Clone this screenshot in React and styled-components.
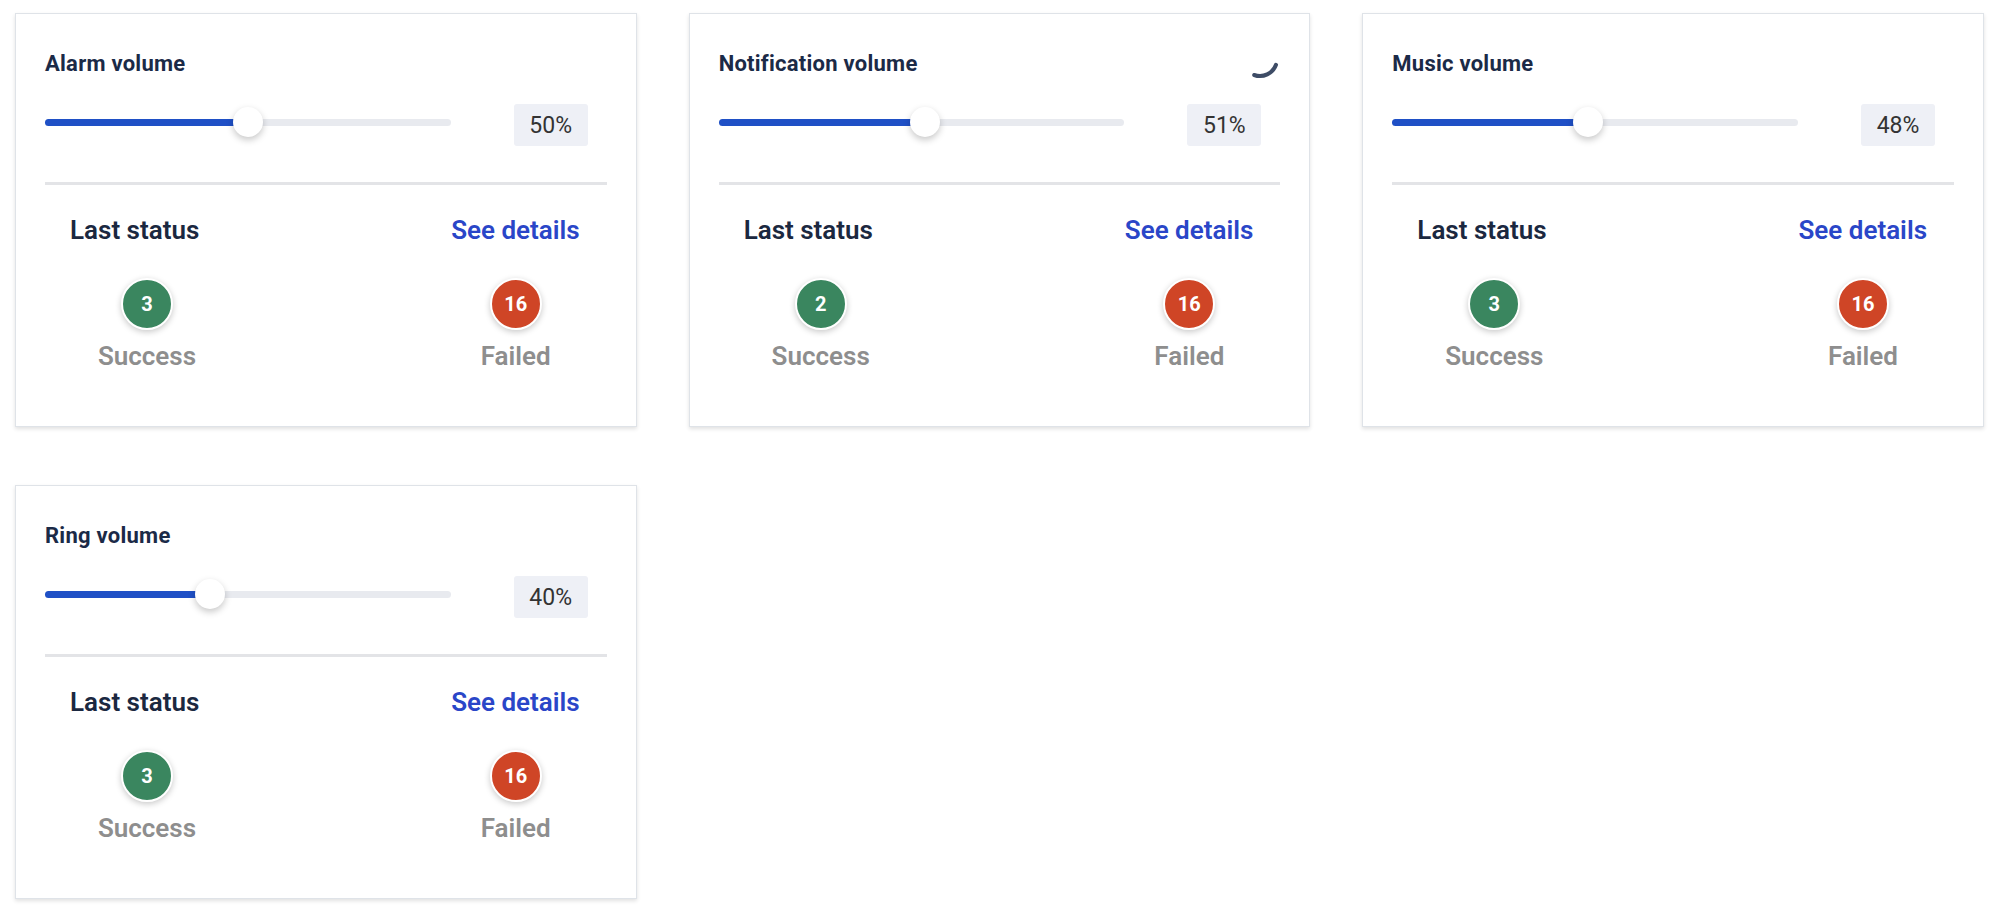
import React from "react";
import styled, { createGlobalStyle } from "styled-components";

const Global = createGlobalStyle`
  html, body { margin: 0; padding: 0; background: #ffffff; }
  body { font-family: Roboto, "Noto Sans", "Liberation Sans", sans-serif; }
  * { box-sizing: border-box; }
`;

const Page = styled.div`
  display: grid;
  grid-template-columns: repeat(3, 1fr);
  column-gap: 52px;
  row-gap: 58px;
  padding: 13px 15px;
  align-items: start;
`;

const Card = styled.div`
  position: relative;
  background: #fff;
  border: 1px solid #dfe3e8;
  box-shadow: 0 2px 4px rgba(0, 0, 0, 0.12);
  padding: 36px 29px 54px 29px;
  display: flex;
  flex-direction: column;
`;

const Title = styled.div`
  font-size: 22px;
  line-height: 27px;
  font-weight: 700;
  letter-spacing: 0.25px;
  color: #1b2a47;
`;

const SliderRow = styled.div`
  display: flex;
  align-items: center;
  height: 42px;
  margin-top: 27px;
`;

const Track = styled.div`
  position: relative;
  flex: 1;
  height: 7px;
  margin-bottom: 6px;
  border-radius: 4px;
  background: #e8eaef;
`;

const Fill = styled.div`
  position: absolute;
  left: 0;
  top: 0;
  bottom: 0;
  border-radius: 4px;
  background: #1f50c6;
`;

const Thumb = styled.div`
  position: absolute;
  top: 50%;
  width: 30px;
  height: 30px;
  margin: -15px 0 0 -15px;
  border-radius: 50%;
  background: #fff;
  box-shadow: 0 3px 7px rgba(0, 0, 0, 0.22);
`;

const ValueBox = styled.div`
  width: 74px;
  height: 42px;
  margin: 0 19px 0 63px;
  border-radius: 3px;
  background: #eef0f6;
  display: flex;
  align-items: center;
  justify-content: center;
  font-size: 23px;
  color: #333;
`;

const Divider = styled.div`
  height: 3px;
  margin-top: 36px;
  background: #e3e4e7;
`;

const Status = styled.div`
  margin-top: 29px;
  padding: 0 27px 0 25px;
  display: flex;
  flex-direction: column;
`;

const StatusHeader = styled.div`
  display: flex;
  justify-content: space-between;
  font-size: 26px;
  line-height: 32px;
  font-weight: 600;
`;

const HeaderLabel = styled.span`
  color: #1b2840;
`;

const DetailsLink = styled.a`
  color: #2a46c8;
  text-decoration: none;
  cursor: pointer;
`;

const Items = styled.div`
  display: flex;
  justify-content: space-between;
  margin-top: 32px;
  padding: 0 4px 0 17px;
`;

const Item = styled.div`
  width: 120px;
  display: flex;
  flex-direction: column;
  align-items: center;
`;

const Badge = styled.div`
  width: 52px;
  height: 52px;
  border-radius: 50%;
  border: 2px solid #fff;
  background: ${(p) => p.$color};
  box-shadow: 0 2px 6px rgba(0, 0, 0, 0.22);
  display: flex;
  align-items: center;
  justify-content: center;
  color: #fff;
  font-size: 20px;
  font-weight: 700;
`;

const ItemLabel = styled.div`
  margin-top: 10px;
  font-size: 26px;
  line-height: 32px;
  font-weight: 600;
  color: #8e8e8e;
`;

const Spinner = styled.svg`
  position: absolute;
  top: 25px;
  right: 29px;
  width: 40px;
  height: 40px;
`;

const THUMB = 30;

function Slider({ value }) {
  const pos = `calc(${value}% - ${(value / 100) * THUMB}px + ${THUMB / 2}px)`;
  return (
    <SliderRow>
      <Track>
        <Fill style={{ width: pos }} />
        <Thumb style={{ left: pos }} />
      </Track>
      <ValueBox>{value}%</ValueBox>
    </SliderRow>
  );
}

function VolumeCard({ title, value, success, failed, loading }) {
  return (
    <Card>
      {loading && (
        <Spinner viewBox="0 0 40 40">
          <path
            d="M 36 25.8 A 17 17 0 0 1 14.2 36"
            fill="none"
            stroke="#3e4c66"
            strokeWidth="4"
            strokeLinecap="round"
          />
        </Spinner>
      )}
      <Title>{title}</Title>
      <Slider value={value} />
      <Divider />
      <Status>
        <StatusHeader>
          <HeaderLabel>Last status</HeaderLabel>
          <DetailsLink>See details</DetailsLink>
        </StatusHeader>
        <Items>
          <Item>
            <Badge $color="#3a865f">{success}</Badge>
            <ItemLabel>Success</ItemLabel>
          </Item>
          <Item>
            <Badge $color="#cf4526">{failed}</Badge>
            <ItemLabel>Failed</ItemLabel>
          </Item>
        </Items>
      </Status>
    </Card>
  );
}

const cards = [
  { title: "Alarm volume", value: 50, success: 3, failed: 16 },
  { title: "Notification volume", value: 51, success: 2, failed: 16, loading: true },
  { title: "Music volume", value: 48, success: 3, failed: 16 },
  { title: "Ring volume", value: 40, success: 3, failed: 16 },
];

export default function App() {
  return (
    <>
      <Global />
      <Page>
        {cards.map((c) => (
          <VolumeCard key={c.title} {...c} />
        ))}
      </Page>
    </>
  );
}
